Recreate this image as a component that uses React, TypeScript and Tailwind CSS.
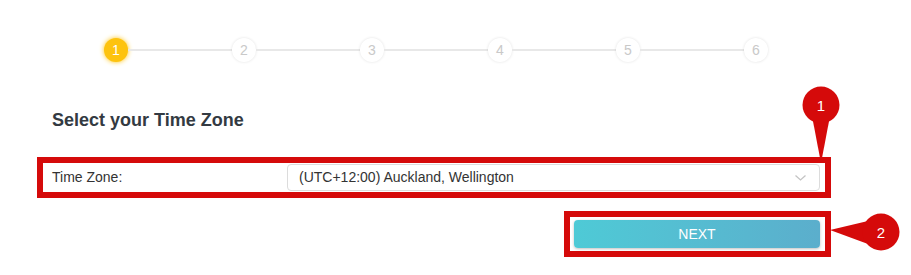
import React from "react";

const steps = [1, 2, 3, 4, 5, 6];

const Stepper = () => (
  <div className="flex items-center pl-[104px] pt-[38px]">
    {steps.map((n, i) => (
      <React.Fragment key={n}>
        {i > 0 && <div className="h-[2px] w-[104px] bg-[#e8e8e8]" />}
        {n === 1 ? (
          <div className="flex h-6 w-6 items-center justify-center rounded-full bg-[#fdc30f] text-[14px] text-white shadow-[0_0_5px_#fdc30f]">
            {n}
          </div>
        ) : (
          <div className="flex h-6 w-6 items-center justify-center rounded-full bg-white text-[14px] text-[#c9c9c9] shadow-[0_0_3px_rgba(0,0,0,0.12)]">
            {n}
          </div>
        )}
      </React.Fragment>
    ))}
  </div>
);

const Callouts = () => (
  <>
    <svg className="absolute left-[798px] top-[84px]" width="46" height="76" viewBox="798 84 46 76">
      <polygon points="812,116 830,116 822,158 820,158" fill="#d50a0a" />
      <circle cx="821" cy="105" r="18.5" fill="#d50a0a" />
      <text x="821" y="110.5" textAnchor="middle" fontSize="15" fill="#fff" fontFamily="'Liberation Sans', Arial, sans-serif">
        1
      </text>
    </svg>
    <svg className="absolute left-[828px] top-[210px]" width="76" height="46" viewBox="828 210 76 46">
      <polygon points="830,230 868,221 868,244" fill="#d50a0a" />
      <circle cx="881" cy="232" r="18.5" fill="#d50a0a" />
      <text x="881" y="237.5" textAnchor="middle" fontSize="15" fill="#fff" fontFamily="'Liberation Sans', Arial, sans-serif">
        2
      </text>
    </svg>
  </>
);

export default function App() {
  return (
    <div className="relative h-[275px] w-[911px] overflow-hidden bg-white font-['Liberation_Sans',Arial,sans-serif] text-[#333]">
      <Stepper />
      <div className="ml-[37px] w-[794px]">
        <h2 className="mt-[46px] pl-[15px] text-[18px] font-bold leading-6 text-[#333a42]">Select your Time Zone</h2>
        <div className="mt-[25px] flex h-[41px] items-center border-[6px] border-[#d50a0a] pr-[5px]">
          <span className="w-[244px] pl-[9px] text-[14px]">Time Zone:</span>
          <div className="flex h-[27px] flex-1 items-center justify-between rounded-[4px] border border-[#dcdcdc] pl-[11px] pr-[13px] text-[14px]">
            <span>(UTC+12:00) Auckland, Wellington</span>
            <svg width="11" height="6" viewBox="0 0 11 6" fill="none" stroke="#c4c4c4" strokeWidth="1.3">
              <path d="M0.5 0.5 L5.5 5 L10.5 0.5" />
            </svg>
          </div>
        </div>
        <div className="ml-auto mt-[13px] h-[46px] w-[267px] border-[6px] border-[#d50a0a] pb-[3px] pl-[4px] pr-[5px] pt-[3px]">
          <button className="flex h-[28px] w-full items-center justify-center rounded-[4px] bg-gradient-to-r from-[#4ecad6] to-[#5baecc] text-[14px] text-white shadow-[0_1px_3px_rgba(0,0,0,0.25)]">
            NEXT
          </button>
        </div>
      </div>
      <Callouts />
    </div>
  );
}
